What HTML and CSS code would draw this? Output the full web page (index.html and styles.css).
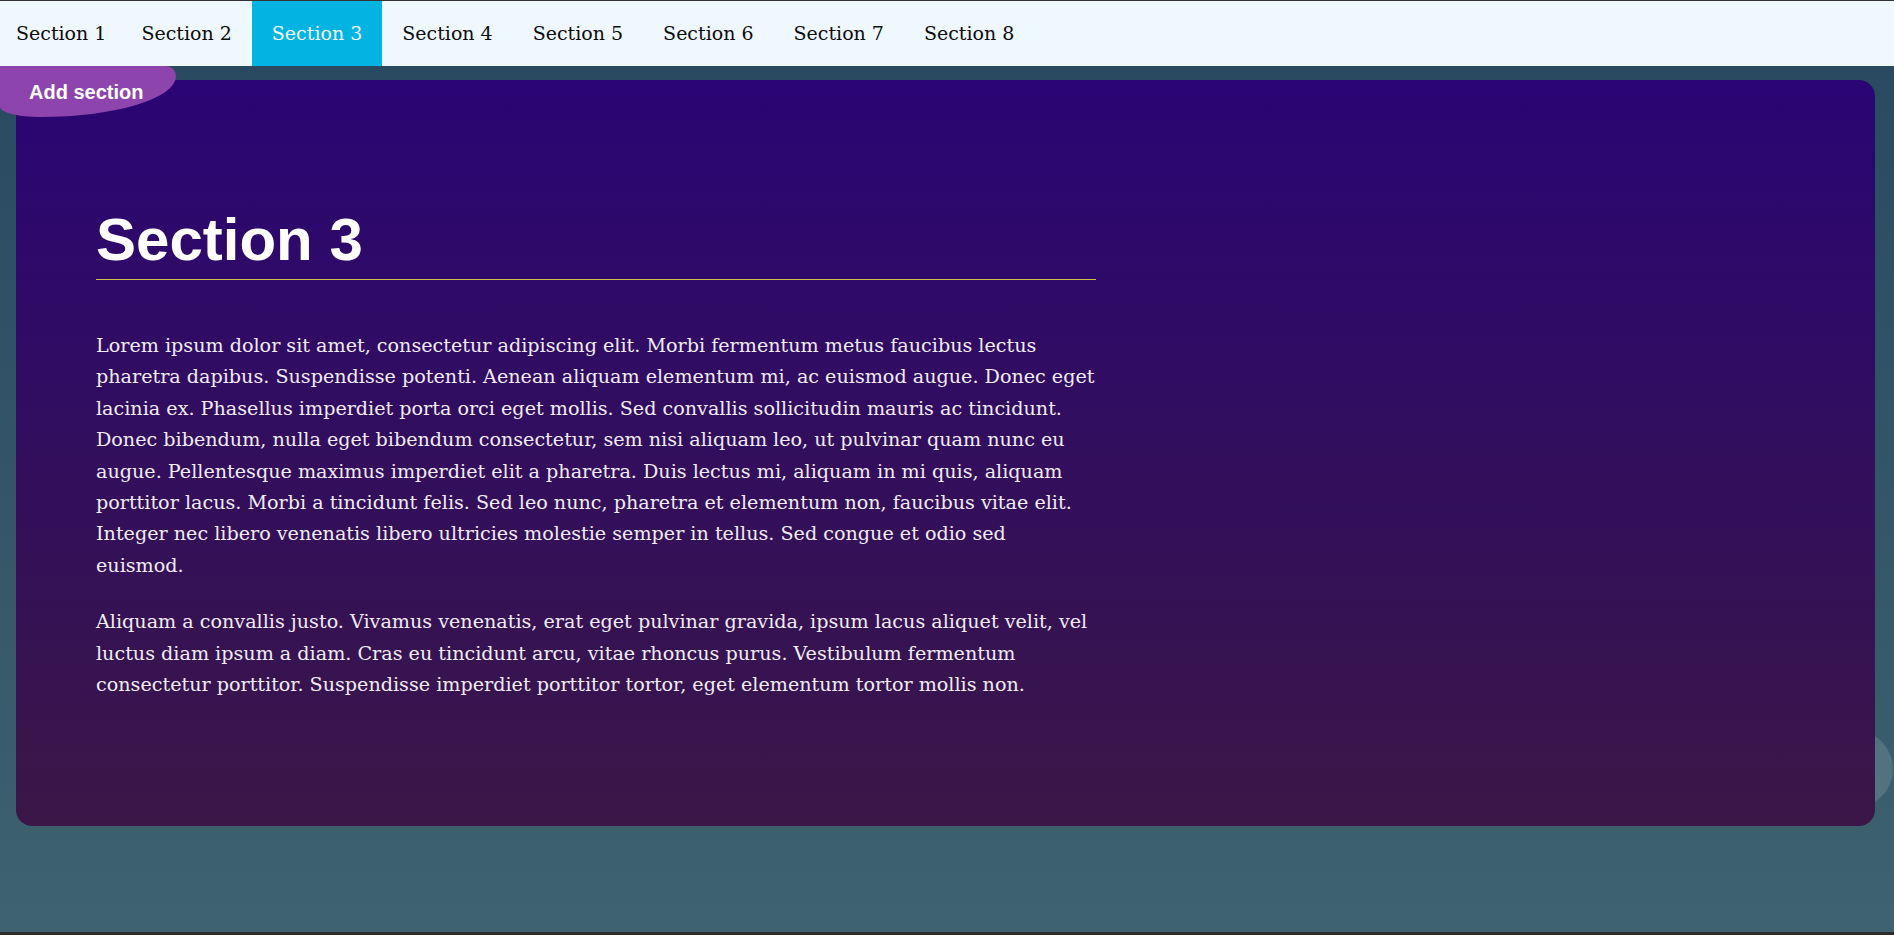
FILE: index.html
```html
<!DOCTYPE html>
<html lang="en">
<head>
<meta charset="utf-8">
<title>Sections</title>
<link rel="stylesheet" href="styles.css">
</head>
<body>
<nav class="tabs">
  <a class="tab">Section 1</a>
  <a class="tab">Section 2</a>
  <a class="tab active">Section 3</a>
  <a class="tab">Section 4</a>
  <a class="tab">Section 5</a>
  <a class="tab">Section 6</a>
  <a class="tab">Section 7</a>
  <a class="tab">Section 8</a>
</nav>
<main class="stage">
  <button class="add-btn">Add section</button>
  <div class="bubble"></div>
  <section class="card">
    <div class="content">
      <h1 class="title">Section 3</h1>
      <p class="text">Lorem ipsum dolor sit amet, consectetur adipiscing elit. Morbi fermentum metus faucibus lectus pharetra dapibus. Suspendisse potenti. Aenean aliquam elementum mi, ac euismod augue. Donec eget lacinia ex. Phasellus imperdiet porta orci eget mollis. Sed convallis sollicitudin mauris ac tincidunt. Donec bibendum, nulla eget bibendum consectetur, sem nisi aliquam leo, ut pulvinar quam nunc eu augue. Pellentesque maximus imperdiet elit a pharetra. Duis lectus mi, aliquam in mi quis, aliquam porttitor lacus. Morbi a tincidunt felis. Sed leo nunc, pharetra et elementum non, faucibus vitae elit. Integer nec libero venenatis libero ultricies molestie semper in tellus. Sed congue et odio sed euismod.</p>
      <p class="text">Aliquam a convallis justo. Vivamus venenatis, erat eget pulvinar gravida, ipsum lacus aliquet velit, vel luctus diam ipsum a diam. Cras eu tincidunt arcu, vitae rhoncus purus. Vestibulum fermentum consectetur porttitor. Suspendisse imperdiet porttitor tortor, eget elementum tortor mollis non.</p>
    </div>
  </section>
</main>
</body>
</html>
```

FILE: styles.css
```css
* { box-sizing: border-box; }

html, body { height: 100%; }

body {
  margin: 0;
  border-top: 1px solid #333;
  border-bottom: 3px solid #2c2c2c;
  background: linear-gradient(#284860, #3e626f);
  display: flex;
  flex-direction: column;
  overflow: hidden;
}

.tabs {
  display: flex;
  height: 65px;
  background: #f0f8ff;
  flex-shrink: 0;
}

.tab {
  display: block;
  padding: 0 20px;
  line-height: 65px;
  font-family: "DejaVu Serif", serif;
  font-size: 19px;
  color: #0c0c0c;
  cursor: pointer;
}

.tab:first-child { padding: 0 15px 0 16px; }

.tab.active {
  background: #03b3e1;
  color: #f4f9ff;
}

.stage {
  position: relative;
  flex: 1;
  padding: 14px 19px 0 16px;
}

.add-btn {
  position: absolute;
  top: 0;
  left: 0;
  z-index: 3;
  width: 176px;
  height: 51px;
  margin: 0;
  border: 0;
  padding: 2px 0 0 29px;
  text-align: left;
  background: #8e44ad;
  color: #fff;
  font-family: "Liberation Sans", Arial, sans-serif;
  font-weight: bold;
  font-size: 20px;
  border-radius: 0 10px 136px 40px / 0 10px 41px 10px;
}

.bubble {
  position: absolute;
  z-index: 0;
  left: 1815px;
  top: 664px;
  width: 78px;
  height: 78px;
  border-radius: 50%;
  background: rgba(255, 255, 255, 0.13);
}

.card {
  position: relative;
  z-index: 1;
  height: 746px;
  border-radius: 16px;
  background: linear-gradient(#2a0574, #3a1747);
  padding: 125px 80px 0;
}

.content {
  width: 1000px;
}

.title {
  margin: 0 0 50px;
  padding-bottom: 5px;
  border-bottom: 1px solid #cfc04a;
  font-family: "Liberation Sans", Arial, sans-serif;
  font-weight: bold;
  font-size: 60px;
  line-height: 69px;
  color: #fff;
}

.text {
  margin: 0 0 25px;
  font-family: "DejaVu Serif", serif;
  font-size: 19.15px;
  line-height: 31.4px;
  color: #f1ecf5;
}
```
